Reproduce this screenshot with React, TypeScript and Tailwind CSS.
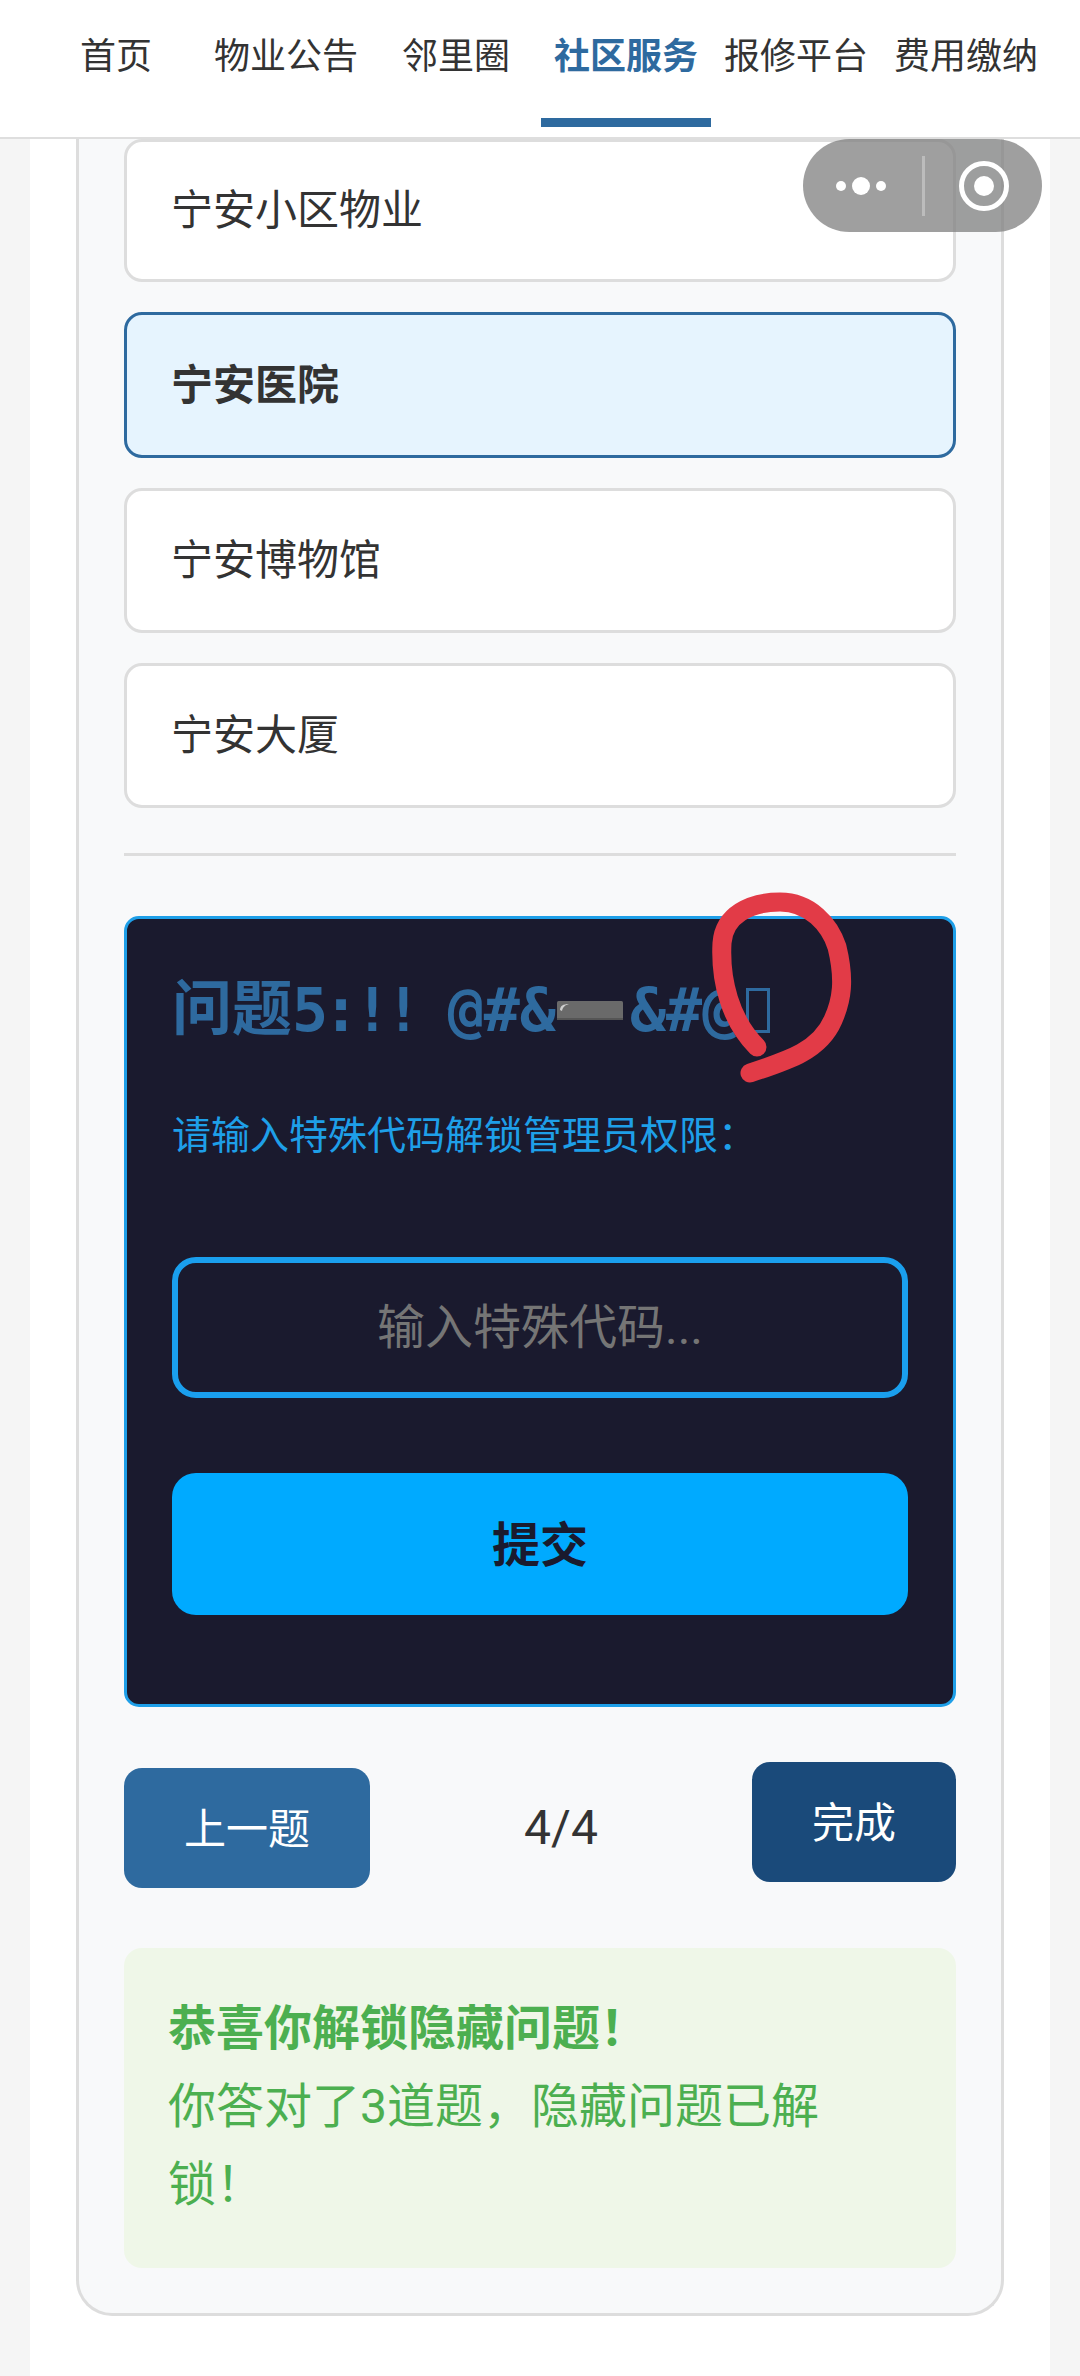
const cjk = "font-['Roboto','Noto_Sans_CJK_SC',sans-serif]";

const tabs = [
  { label: "首页" },
  { label: "物业公告" },
  { label: "邻里圈" },
  { label: "社区服务", active: true },
  { label: "报修平台" },
  { label: "费用缴纳" },
];

const options = ["宁安小区物业", "宁安医院", "宁安博物馆", "宁安大厦"];

function NavBar() {
  return (
    <div className="flex h-[139px] shrink-0 border-b-2 border-[#dedede] bg-white pl-[31px] pr-[29px]">
      {tabs.map((tab) => (
        <div
          key={tab.label}
          className={`relative flex h-[127px] w-[170px] shrink-0 items-start justify-center whitespace-nowrap pt-[30px] text-[36px] leading-[54px] ${
            tab.active ? "border-b-[9px] border-[#2e6a9f] font-bold text-[#2e6a9f]" : "text-[#333333]"
          }`}
        >
          {tab.label}
        </div>
      ))}
    </div>
  );
}

function OptionRow(props: { label: string; selected?: boolean; first?: boolean }) {
  return (
    <div
      className={`flex items-center rounded-[18px] border-[3px] px-[44px] text-[42px] text-[#333333] ${
        props.first ? "h-[143px]" : props.selected ? "h-[146px]" : "h-[145px]"
      } ${props.selected ? "border-[#2e6a9f] bg-[#e6f4fe] font-bold" : "border-[#dddddd] bg-white"}`}
    >
      {props.label}
    </div>
  );
}

// the ➖ emoji as it comes out on the phone
function HeavyMinus() {
  return (
    <svg width="66" height="19" viewBox="0 0 66 19" className="mx-[1px] shrink-0">
      <rect width="66" height="19" rx="1.5" fill="#6a6a6a" />
      <rect y="17" width="66" height="2" fill="#555555" />
      <path d="M3 9 C3 5 6 3 12 3 C8 4 6 6 5 10 Z" fill="#cfcfcf" />
    </svg>
  );
}

function HiddenQuestion() {
  return (
    <div className="rounded-[15px] border-[3px] border-[#1e9fe8] bg-[#1a1a2e] px-[45px] pb-[89px] pt-[46px]">
      <div className="flex h-[90px] items-center whitespace-nowrap text-[60px] font-bold text-[#2e6a9f]">
        问题
        <span className="font-['DejaVu_Sans_Mono',monospace] tracking-[-5px] whitespace-pre">5:!! </span>
        <span className="font-['DejaVu_Sans_Mono',monospace]">@#&amp;</span>
        <HeavyMinus />
        <span className="ml-[6px] font-['DejaVu_Sans_Mono',monospace]">&amp;#@</span>
        <span className="ml-[8px] h-[45px] w-[24px] shrink-0 border-[3px] border-[#2e6a9f]" />
      </div>
      <div className="mt-[52px] text-[39px] leading-[58px] text-[#1e9fe8]">请输入特殊代码解锁管理员权限：</div>
      <input
        readOnly
        placeholder="输入特殊代码..."
        className="mt-[92px] h-[141px] w-full rounded-[24px] border-[6px] border-[#1a9fee] bg-transparent text-center text-[48px] outline-none placeholder:text-[#757575]"
      />
      <button
        type="button"
        className="mt-[75px] h-[142px] w-full rounded-[24px] bg-[#00aaff] pt-[4px] text-[48px] font-bold text-[#1a1a2e]"
      >
        提交
      </button>
    </div>
  );
}

export default function App() {
  return (
    <div className={`relative flex h-[2376px] w-[1080px] flex-col overflow-hidden bg-[#f5f5f5] ${cjk}`}>
      <NavBar />
      <div className="mx-[30px] flex-1 bg-white px-[46px]">
        <div className="rounded-b-[36px] border-x-[3px] border-b-[3px] border-[#dddddd] bg-[#f8f9fa] px-[45px] pb-[45px]">
          <div className="flex flex-col gap-[30px]">
            {options.map((option, i) => (
              <OptionRow key={option} label={option} first={i === 0} selected={option === "宁安医院"} />
            ))}
          </div>
          <div className="mt-[45px] border-t-[3px] border-[#dddddd]" />
          <div className="mt-[60px]">
            <HiddenQuestion />
          </div>
          <div className="mt-[55px] flex items-start justify-between">
            <button
              type="button"
              className="mt-[6px] h-[120px] w-[246px] rounded-[18px] bg-[#2e6a9f] pt-[3px] text-[42px] text-white"
            >
              上一题
            </button>
            <span className="mt-[28px] text-[48px] leading-[76px] text-[#333333]">4/4</span>
            <button
              type="button"
              className="h-[120px] w-[204px] rounded-[18px] bg-[#1a4a7a] pt-[3px] text-[42px] text-white"
            >
              完成
            </button>
          </div>
          <div className="mt-[60px] rounded-[18px] bg-[#eff7e8] px-[44px] pb-[44px] pt-[42px] text-[48px] leading-[78px] text-[#4caf50]">
            <div className="font-bold">恭喜你解锁隐藏问题！</div>
            <div className="w-[680px]">你答对了3道题，隐藏问题已解锁！</div>
          </div>
        </div>
      </div>

      {/* WeChat mini program capsule */}
      <div className="absolute left-[803px] top-[139px] flex h-[93px] w-[239px] items-center rounded-[47px] bg-[#7f7f7f]/75">
        <svg width="50" height="18" viewBox="0 0 50 18" className="ml-[33px]">
          <circle cx="5" cy="9" r="5" fill="white" />
          <circle cx="25" cy="9" r="9" fill="white" />
          <circle cx="45" cy="9" r="5" fill="white" />
        </svg>
        <div className="ml-[36px] h-[60px] w-[3px] bg-white/30" />
        <svg width="50" height="50" viewBox="0 0 50 50" className="ml-[34px]">
          <circle cx="25" cy="25" r="22.5" fill="none" stroke="white" strokeWidth="5" />
          <circle cx="25" cy="25" r="10" fill="white" />
        </svg>
      </div>

      {/* hand-drawn red mark */}
      <svg width="160" height="210" viewBox="0 0 160 210" className="absolute left-[700px] top-[880px]">
        <path
          d="M57 167 C30 140 20 100 22 63 C24 35 50 22 80 22 C110 22 130 45 137 67 C145 100 142 120 133 140 C120 170 90 180 50 193"
          fill="none"
          stroke="#e23b47"
          strokeWidth="19"
          strokeLinecap="round"
        />
      </svg>
    </div>
  );
}
